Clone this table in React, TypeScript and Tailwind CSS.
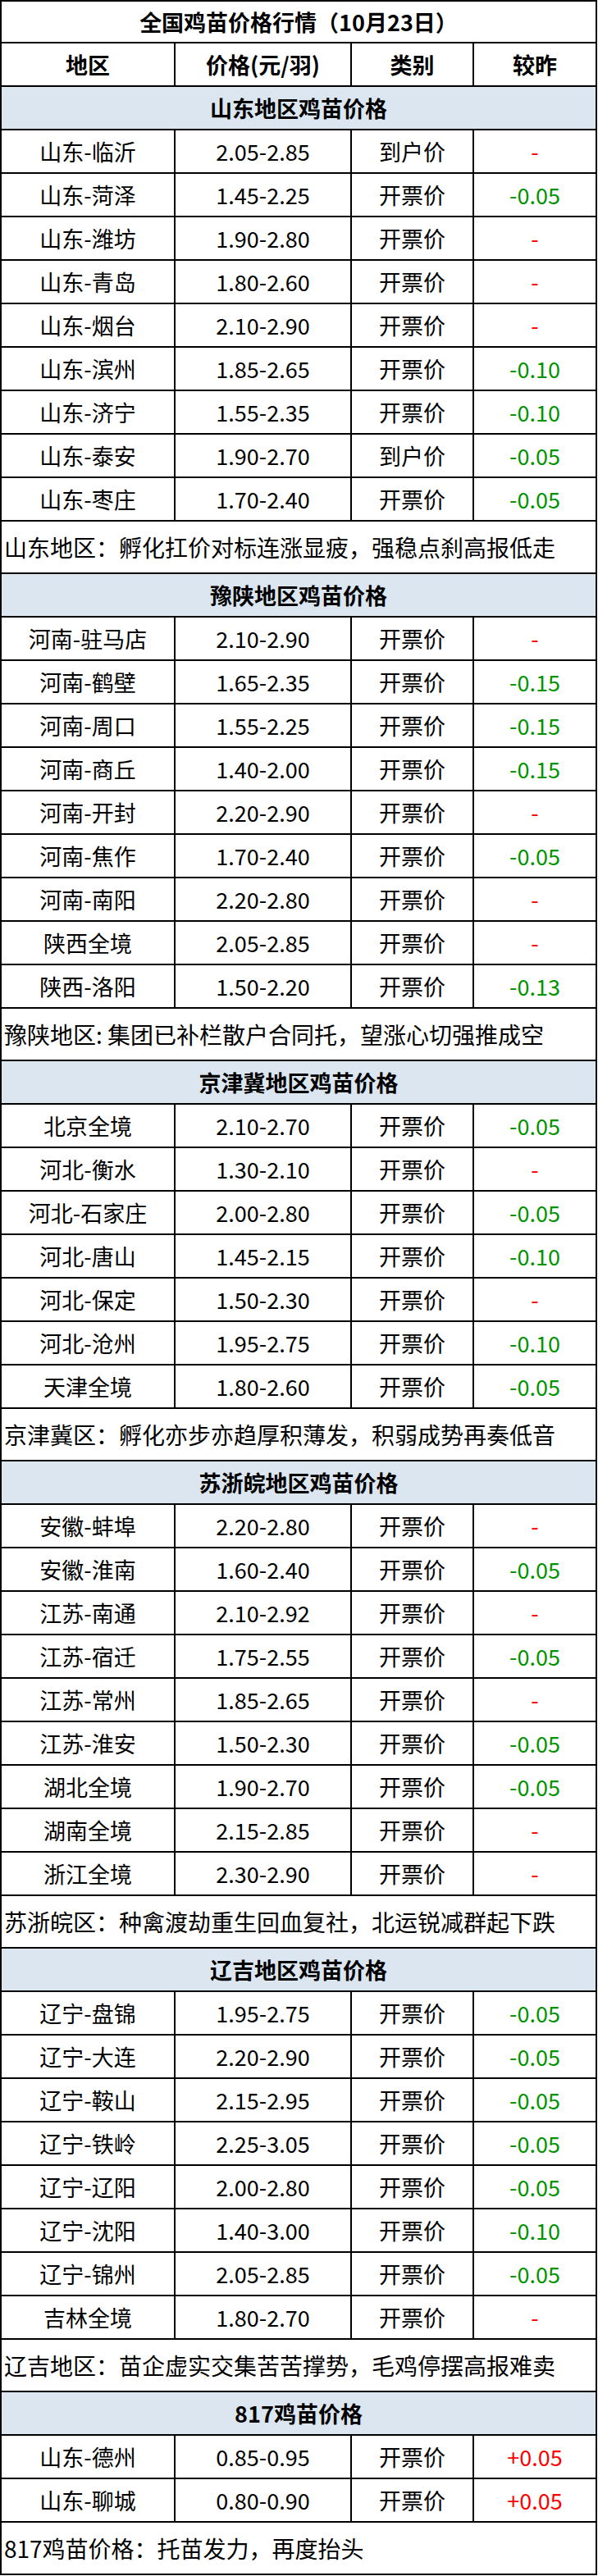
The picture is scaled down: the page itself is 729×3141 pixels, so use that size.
import React from "react";

type Row = [string, string, string, string];

interface Section {
  title: string;
  rows: Row[];
  note: string;
}

const SECTIONS: Section[] = [
  {
    title: "山东地区鸡苗价格",
    rows: [
      ["山东-临沂", "2.05-2.85", "到户价", "-"],
      ["山东-菏泽", "1.45-2.25", "开票价", "-0.05"],
      ["山东-潍坊", "1.90-2.80", "开票价", "-"],
      ["山东-青岛", "1.80-2.60", "开票价", "-"],
      ["山东-烟台", "2.10-2.90", "开票价", "-"],
      ["山东-滨州", "1.85-2.65", "开票价", "-0.10"],
      ["山东-济宁", "1.55-2.35", "开票价", "-0.10"],
      ["山东-泰安", "1.90-2.70", "到户价", "-0.05"],
      ["山东-枣庄", "1.70-2.40", "开票价", "-0.05"],
    ],
    note: "山东地区：孵化扛价对标连涨显疲，强稳点刹高报低走",
  },
  {
    title: "豫陕地区鸡苗价格",
    rows: [
      ["河南-驻马店", "2.10-2.90", "开票价", "-"],
      ["河南-鹤壁", "1.65-2.35", "开票价", "-0.15"],
      ["河南-周口", "1.55-2.25", "开票价", "-0.15"],
      ["河南-商丘", "1.40-2.00", "开票价", "-0.15"],
      ["河南-开封", "2.20-2.90", "开票价", "-"],
      ["河南-焦作", "1.70-2.40", "开票价", "-0.05"],
      ["河南-南阳", "2.20-2.80", "开票价", "-"],
      ["陕西全境", "2.05-2.85", "开票价", "-"],
      ["陕西-洛阳", "1.50-2.20", "开票价", "-0.13"],
    ],
    note: "豫陕地区: 集团已补栏散户合同托，望涨心切强推成空",
  },
  {
    title: "京津冀地区鸡苗价格",
    rows: [
      ["北京全境", "2.10-2.70", "开票价", "-0.05"],
      ["河北-衡水", "1.30-2.10", "开票价", "-"],
      ["河北-石家庄", "2.00-2.80", "开票价", "-0.05"],
      ["河北-唐山", "1.45-2.15", "开票价", "-0.10"],
      ["河北-保定", "1.50-2.30", "开票价", "-"],
      ["河北-沧州", "1.95-2.75", "开票价", "-0.10"],
      ["天津全境", "1.80-2.60", "开票价", "-0.05"],
    ],
    note: "京津冀区：孵化亦步亦趋厚积薄发，积弱成势再奏低音",
  },
  {
    title: "苏浙皖地区鸡苗价格",
    rows: [
      ["安徽-蚌埠", "2.20-2.80", "开票价", "-"],
      ["安徽-淮南", "1.60-2.40", "开票价", "-0.05"],
      ["江苏-南通", "2.10-2.92", "开票价", "-"],
      ["江苏-宿迁", "1.75-2.55", "开票价", "-0.05"],
      ["江苏-常州", "1.85-2.65", "开票价", "-"],
      ["江苏-淮安", "1.50-2.30", "开票价", "-0.05"],
      ["湖北全境", "1.90-2.70", "开票价", "-0.05"],
      ["湖南全境", "2.15-2.85", "开票价", "-"],
      ["浙江全境", "2.30-2.90", "开票价", "-"],
    ],
    note: "苏浙皖区：种禽渡劫重生回血复社，北运锐减群起下跌",
  },
  {
    title: "辽吉地区鸡苗价格",
    rows: [
      ["辽宁-盘锦", "1.95-2.75", "开票价", "-0.05"],
      ["辽宁-大连", "2.20-2.90", "开票价", "-0.05"],
      ["辽宁-鞍山", "2.15-2.95", "开票价", "-0.05"],
      ["辽宁-铁岭", "2.25-3.05", "开票价", "-0.05"],
      ["辽宁-辽阳", "2.00-2.80", "开票价", "-0.05"],
      ["辽宁-沈阳", "1.40-3.00", "开票价", "-0.10"],
      ["辽宁-锦州", "2.05-2.85", "开票价", "-0.05"],
      ["吉林全境", "1.80-2.70", "开票价", "-"],
    ],
    note: "辽吉地区：苗企虚实交集苦苦撑势，毛鸡停摆高报难卖",
  },
  {
    title: "817鸡苗价格",
    rows: [
      ["山东-德州", "0.85-0.95", "开票价", "+0.05"],
      ["山东-聊城", "0.80-0.90", "开票价", "+0.05"],
    ],
    note: "817鸡苗价格：托苗发力，再度抬头",
  },
];

const FONT = "font-['Noto_Sans_CJK_SC','Noto_Sans',sans-serif]";

// 单元格：右边框 + 下边框，文字居中
function Cell({
  children,
  className = "",
}: {
  children: React.ReactNode;
  className?: string;
}) {
  return (
    <div
      className={`flex items-center justify-center border-r-2 border-b-2 border-black h-[53px] leading-none ${className}`}
    >
      {children}
    </div>
  );
}

function changeColor(v: string): string {
  if (v.startsWith("-") && v.length > 1) return "text-[#009300]";
  return "text-[#ff0000]";
}

export default function App(): React.ReactElement {
  return (
    <div className={`w-[729px] bg-white text-black ${FONT}`}>
      <div className="w-[728px] border-l-2 border-t-2 border-black grid grid-cols-[212px_215px_149px_150px]">
        {/* 标题 */}
        <div className="col-span-4 flex items-center justify-center border-r-2 border-b-2 border-black h-[51px] text-[27px] font-bold leading-none">
          全国鸡苗价格行情（10月23日）
        </div>

        {/* 表头 */}
        <Cell className="text-[27px] font-bold">地区</Cell>
        <Cell className="text-[27px] font-bold">价格(元/羽)</Cell>
        <Cell className="text-[27px] font-bold">类别</Cell>
        <Cell className="text-[27px] font-bold">较昨</Cell>

        {SECTIONS.map((sec) => (
          <React.Fragment key={sec.title}>
            <div className="col-span-4 flex items-center justify-center border-r-2 border-b-2 border-black h-[53px] bg-[#dce6f1] text-[27px] font-bold leading-none">
              {sec.title}
            </div>
            {sec.rows.map((r) => (
              <React.Fragment key={r[0]}>
                <Cell className="text-[27px]">{r[0]}</Cell>
                <Cell className="text-[27px]">{r[1]}</Cell>
                <Cell className="text-[27px]">{r[2]}</Cell>
                <Cell className={`text-[27px] ${changeColor(r[3])}`}>
                  {r[3]}
                </Cell>
              </React.Fragment>
            ))}
            <div className="col-span-4 flex items-center border-r-2 border-b-2 border-black h-[64px] pl-[3px] text-[28px] leading-none whitespace-nowrap">
              {sec.note}
            </div>
          </React.Fragment>
        ))}
      </div>
    </div>
  );
}
